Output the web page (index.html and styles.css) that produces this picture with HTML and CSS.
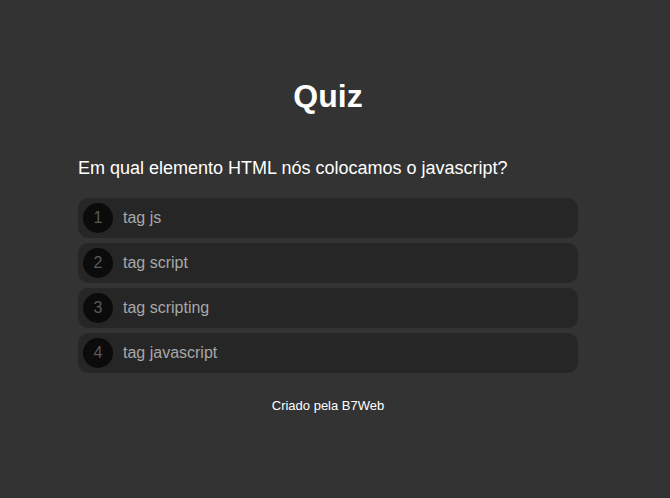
FILE: index.html
```html
<!DOCTYPE html>
<html>
<head>
<meta charset="utf-8">
<link rel="stylesheet" href="styles.css">
</head>
<body>
<div class="page">
  <div class="container">
    <h1 class="title">Quiz</h1>
    <div class="question">Em qual elemento HTML nós colocamos o javascript?</div>
    <div class="options">
      <div class="option"><span class="num">1</span><span class="label">tag js</span></div>
      <div class="option"><span class="num">2</span><span class="label">tag script</span></div>
      <div class="option"><span class="num">3</span><span class="label">tag scripting</span></div>
      <div class="option"><span class="num">4</span><span class="label">tag javascript</span></div>
    </div>
    <div class="footer">Criado pela B7Web</div>
  </div>
</div>
</body>
</html>
```
FILE: styles.css
```css
html, body {
  margin: 0;
  padding: 0;
  background: #333333;
  font-family: "Liberation Sans", Arial, sans-serif;
  height: 100%;
}
.page {
  padding-right: 14px;
}
.container {
  width: 500px;
  margin: 0 auto;
  padding-top: 78px;
}
.title {
  margin: 0;
  text-align: center;
  color: #ffffff;
  font-size: 32px;
  font-weight: bold;
  line-height: 37px;
}
.question {
  margin-top: 43px;
  color: #ffffff;
  font-size: 18px;
  line-height: 21px;
}
.options {
  margin-top: 19px;
  display: flex;
  flex-direction: column;
  gap: 5px;
}
.option {
  height: 40px;
  background: #262626;
  border-radius: 10px;
  display: flex;
  align-items: center;
  padding-left: 5px;
  box-sizing: border-box;
}
.num {
  width: 30px;
  height: 30px;
  border-radius: 50%;
  background: #0b0b0b;
  color: #5a5a5a;
  font-size: 16px;
  display: flex;
  align-items: center;
  justify-content: center;
  flex-shrink: 0;
}
.label {
  margin-left: 10px;
  color: #a8a8a8;
  font-size: 16px;
}
.footer {
  margin-top: 25px;
  text-align: center;
  color: #ffffff;
  font-size: 13px;
}
```
